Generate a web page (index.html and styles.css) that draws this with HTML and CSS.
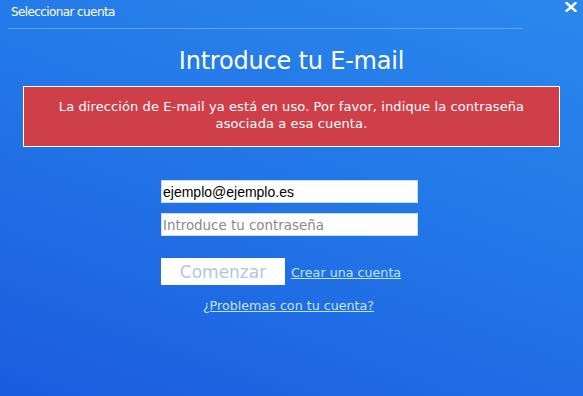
FILE: index.html
```html
<!DOCTYPE html>
<html lang="es">
<head>
    <meta charset="UTF-8">
    <title>Seleccionar cuenta</title>
    <link rel="stylesheet" href="styles.css">
</head>
<body>
    <div class="window">
        <div class="titlebar">
            <span class="title">Seleccionar cuenta</span>
            <svg class="close" width="12" height="10" viewBox="0 0 12 10">
                <path d="M1.5 1 L10.5 9 M10.5 1 L1.5 9" stroke="#fff" stroke-width="2.4" stroke-linecap="square"/>
            </svg>
        </div>
        <div class="content">
            <h1>Introduce tu E-mail</h1>
            <div class="error-box">
                La dirección de E-mail ya está en uso. Por favor, indique la contraseña<br>
                asociada a esa cuenta.
            </div>
            <div class="form">
                <input type="text" class="field" value="ejemplo@ejemplo.es">
                <input type="password" class="field" placeholder="Introduce tu contraseña">
                <div class="actions">
                    <button class="start-btn">Comenzar</button>
                    <a href="#" class="link">Crear una cuenta</a>
                </div>
                <a href="#" class="link problems">¿Problemas con tu cuenta?</a>
            </div>
        </div>
    </div>
</body>
</html>
```

FILE: styles.css
```css
body {
    margin: 0;
    font-family: 'DejaVu Sans', Verdana, sans-serif;
    color: #fff;
}
.window {
    width: 583px;
    height: 396px;
    overflow: hidden;
    background: linear-gradient(200deg, #2a88ec 0%, #2377e8 45%, #1c5cdf 100%);
}
.titlebar {
    height: 28px;
    margin: 0 60px 0 8px;
    border-bottom: 1px solid #5ea4f2;
    position: relative;
}
.title {
    display: inline-block;
    font-size: 12px;
    padding: 5px 0 0 3px;
    letter-spacing: -0.6px;
}
.close {
    position: absolute;
    right: -54px;
    top: 2px;
}
.content {
    display: flex;
    flex-direction: column;
    align-items: center;
}
h1 {
    font-weight: normal;
    font-size: 24px;
    margin: 18px 0 11px;
    letter-spacing: -0.2px;
}
.error-box {
    width: 537px;
    box-sizing: border-box;
    background-color: #cf3f4a;
    border: 1px solid #fff;
    padding: 11px 0 14px;
    font-size: 13px;
    letter-spacing: 0.1px;
    line-height: 17px;
    text-align: center;
}
.form {
    display: flex;
    flex-direction: column;
    align-items: flex-start;
    width: 257px;
    margin: 33px 0 0 -4px;
}
.field {
    width: 257px;
    height: 23px;
    box-sizing: border-box;
    border: 1px solid #cfdcf0;
    padding: 0 2px 0 1px;
    font-family: 'Liberation Sans', Arial, sans-serif;
    font-size: 14px;
    color: #000;
    margin-bottom: 10px;
    outline: none;
}
.field::placeholder {
    font-family: 'DejaVu Sans', Verdana, sans-serif;
    font-size: 13.4px;
    color: #8a8a8a;
}
.actions {
    display: flex;
    align-items: center;
    gap: 6px;
    margin-top: 12px;
}
.start-btn {
    width: 124px;
    height: 27px;
    border: none;
    background-color: #fff;
    color: #b3c5e3;
    font-family: 'DejaVu Sans', Verdana, sans-serif;
    font-size: 17px;
    padding: 0;
}
.link {
    color: #bfe6ff;
    font-size: 12.7px;
    text-decoration: underline;
}
.actions .link {
    margin-top: 2px;
}
.problems {
    align-self: center;
    margin: 13px 0 0 -2px;
}
```
